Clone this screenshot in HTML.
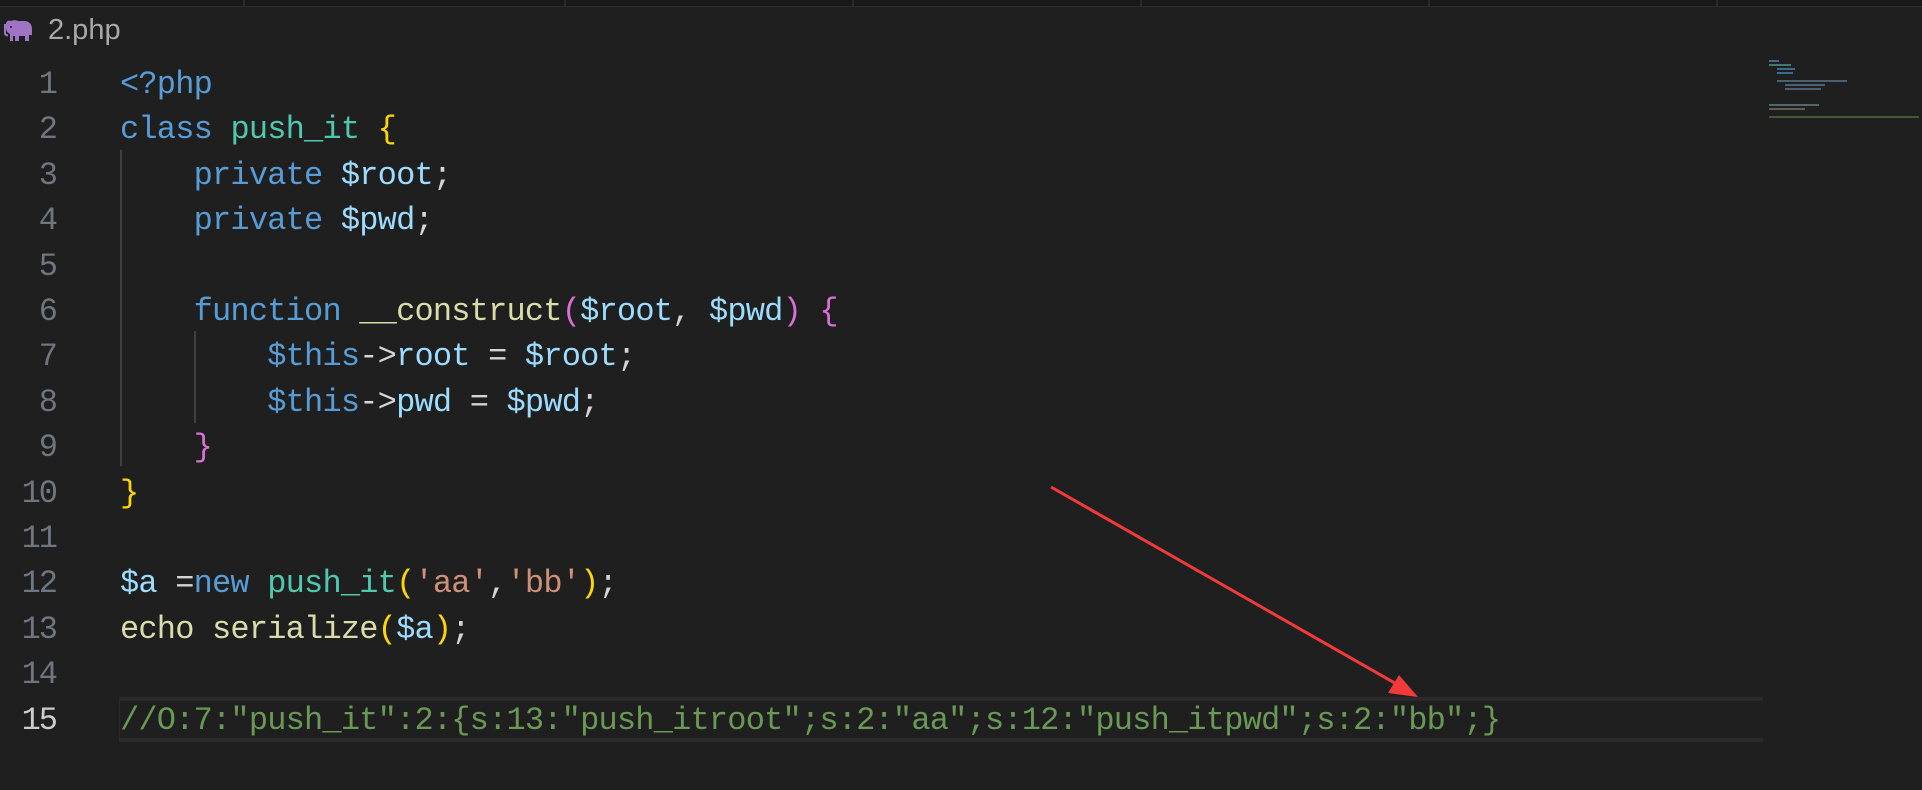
<!DOCTYPE html>
<html><head><meta charset="utf-8"><style>
html,body{margin:0;padding:0;background:#1f1f1f;width:1922px;height:790px;overflow:hidden;position:relative}
.top{position:absolute;left:0;top:0;width:1922px;height:6px;background:#181818;border-bottom:1px solid #2b2b2b}
.sep{position:absolute;top:0;width:2px;height:6px;background:#2b2b2b}
.title{position:absolute;left:48px;top:14px;font:29px "Liberation Sans",sans-serif;color:#a8a8a8}
.code{position:absolute;left:0;top:62px;font:32px/45.4px "Liberation Mono",monospace;letter-spacing:-0.8px;color:#d4d4d4;white-space:pre}
.ln{position:absolute;left:0;width:56px;text-align:right;color:#6e7681;letter-spacing:-2px}
.tx{position:absolute;left:120px}
.k{color:#569cd6}.c{color:#4ec9b0}.y{color:#ffd700}.v{color:#9cdcfe}.f{color:#dcdcaa}.p{color:#da70d6}.s{color:#ce9178}.g{color:#6a9955}
.guide{position:absolute;width:2px;background:#404040}
.hl{position:absolute;left:119px;top:697px;width:1643px;height:37px;border:4px solid #2a2a2a;border-left:1px solid #2a2a2a;border-right:none}
.mm{position:absolute;height:2px}
</style></head><body>
<div class="top"></div>
<div class="sep" style="left:243px"></div><div class="sep" style="left:564px"></div><div class="sep" style="left:852px"></div><div class="sep" style="left:1140px"></div><div class="sep" style="left:1428px"></div><div class="sep" style="left:1716px"></div>
<svg style="position:absolute;left:3px;top:20px" width="30" height="23" viewBox="0 0 30 23"><path fill="#a074c4" d="M3 4c0-3 3-4 5-3 2-1 5-1 7 0h6c5 0 8 3 8 8v6h-3v6h-4v-5h-6v5h-4v-5h-2v5H7v-7C5 13 3 11 3 8v5c0 1 1 2 2 1v2c-2 1-4-1-4-3V4z"/><circle cx="8" cy="7" r="1" fill="#1f1f1f"/></svg>
<div class="title">2.php</div>
<div class="hl"></div>
<div class="guide" style="left:120px;top:150px;height:316px"></div>
<div class="guide" style="left:194px;top:331px;height:92px"></div>
<div class="code">
<div class="ln" style="top:0">1</div><div class="tx" style="top:0"><span class="k">&lt;?php</span></div>
<div class="ln" style="top:45.4px">2</div><div class="tx" style="top:45.4px"><span class="k">class</span> <span class="c">push_it</span> <span class="y">{</span></div>
<div class="ln" style="top:90.8px">3</div><div class="tx" style="top:90.8px">    <span class="k">private</span> <span class="v">$root</span>;</div>
<div class="ln" style="top:136.2px">4</div><div class="tx" style="top:136.2px">    <span class="k">private</span> <span class="v">$pwd</span>;</div>
<div class="ln" style="top:181.6px">5</div>
<div class="ln" style="top:227px">6</div><div class="tx" style="top:227px">    <span class="k">function</span> <span class="f">__construct</span><span class="p">(</span><span class="v">$root</span>, <span class="v">$pwd</span><span class="p">)</span> <span class="p">{</span></div>
<div class="ln" style="top:272.4px">7</div><div class="tx" style="top:272.4px">        <span class="k">$this</span>-&gt;<span class="v">root</span> = <span class="v">$root</span>;</div>
<div class="ln" style="top:317.8px">8</div><div class="tx" style="top:317.8px">        <span class="k">$this</span>-&gt;<span class="v">pwd</span> = <span class="v">$pwd</span>;</div>
<div class="ln" style="top:363.2px">9</div><div class="tx" style="top:363.2px">    <span class="p">}</span></div>
<div class="ln" style="top:408.6px">10</div><div class="tx" style="top:408.6px"><span class="y">}</span></div>
<div class="ln" style="top:454px">11</div>
<div class="ln" style="top:499.4px">12</div><div class="tx" style="top:499.4px"><span class="v">$a</span> =<span class="k">new</span> <span class="c">push_it</span><span class="y">(</span><span class="s">'aa'</span>,<span class="s">'bb'</span><span class="y">)</span>;</div>
<div class="ln" style="top:544.8px">13</div><div class="tx" style="top:544.8px"><span class="f">echo</span> <span class="f">serialize</span><span class="y">(</span><span class="v">$a</span><span class="y">)</span>;</div>
<div class="ln" style="top:590.2px">14</div>
<div class="ln" style="top:635.6px;color:#cccccc">15</div><div class="tx" style="top:635.6px"><span class="g">//O:7:"push_it":2:{s:13:"push_itroot";s:2:"aa";s:12:"push_itpwd";s:2:"bb";}</span></div>
</div>
<div class="mm" style="left:1769px;top:60px;width:10px;background:#3d6a8f"></div>
<div class="mm" style="left:1769px;top:64px;width:22px;background:#3d7a70"></div>
<div class="mm" style="left:1777px;top:68px;width:18px;background:#3d6a8f"></div>
<div class="mm" style="left:1777px;top:72px;width:16px;background:#3d6a8f"></div>
<div class="mm" style="left:1777px;top:80px;width:70px;background:#4a5f72"></div>
<div class="mm" style="left:1785px;top:84px;width:40px;background:#4a5f72"></div>
<div class="mm" style="left:1785px;top:88px;width:36px;background:#4a5f72"></div>
<div class="mm" style="left:1769px;top:104px;width:50px;background:#4a6a6a"></div>
<div class="mm" style="left:1769px;top:108px;width:36px;background:#5f5f50"></div>
<div class="mm" style="left:1769px;top:116px;width:150px;background:#3f5a35"></div>
<svg style="position:absolute;left:0;top:0" width="1922" height="790"><line x1="1051" y1="487" x2="1400" y2="686" stroke="#f23a3a" stroke-width="3"/><polygon points="1418,697 1388,693 1399,675" fill="#f23a3a"/></svg>
</body></html>
